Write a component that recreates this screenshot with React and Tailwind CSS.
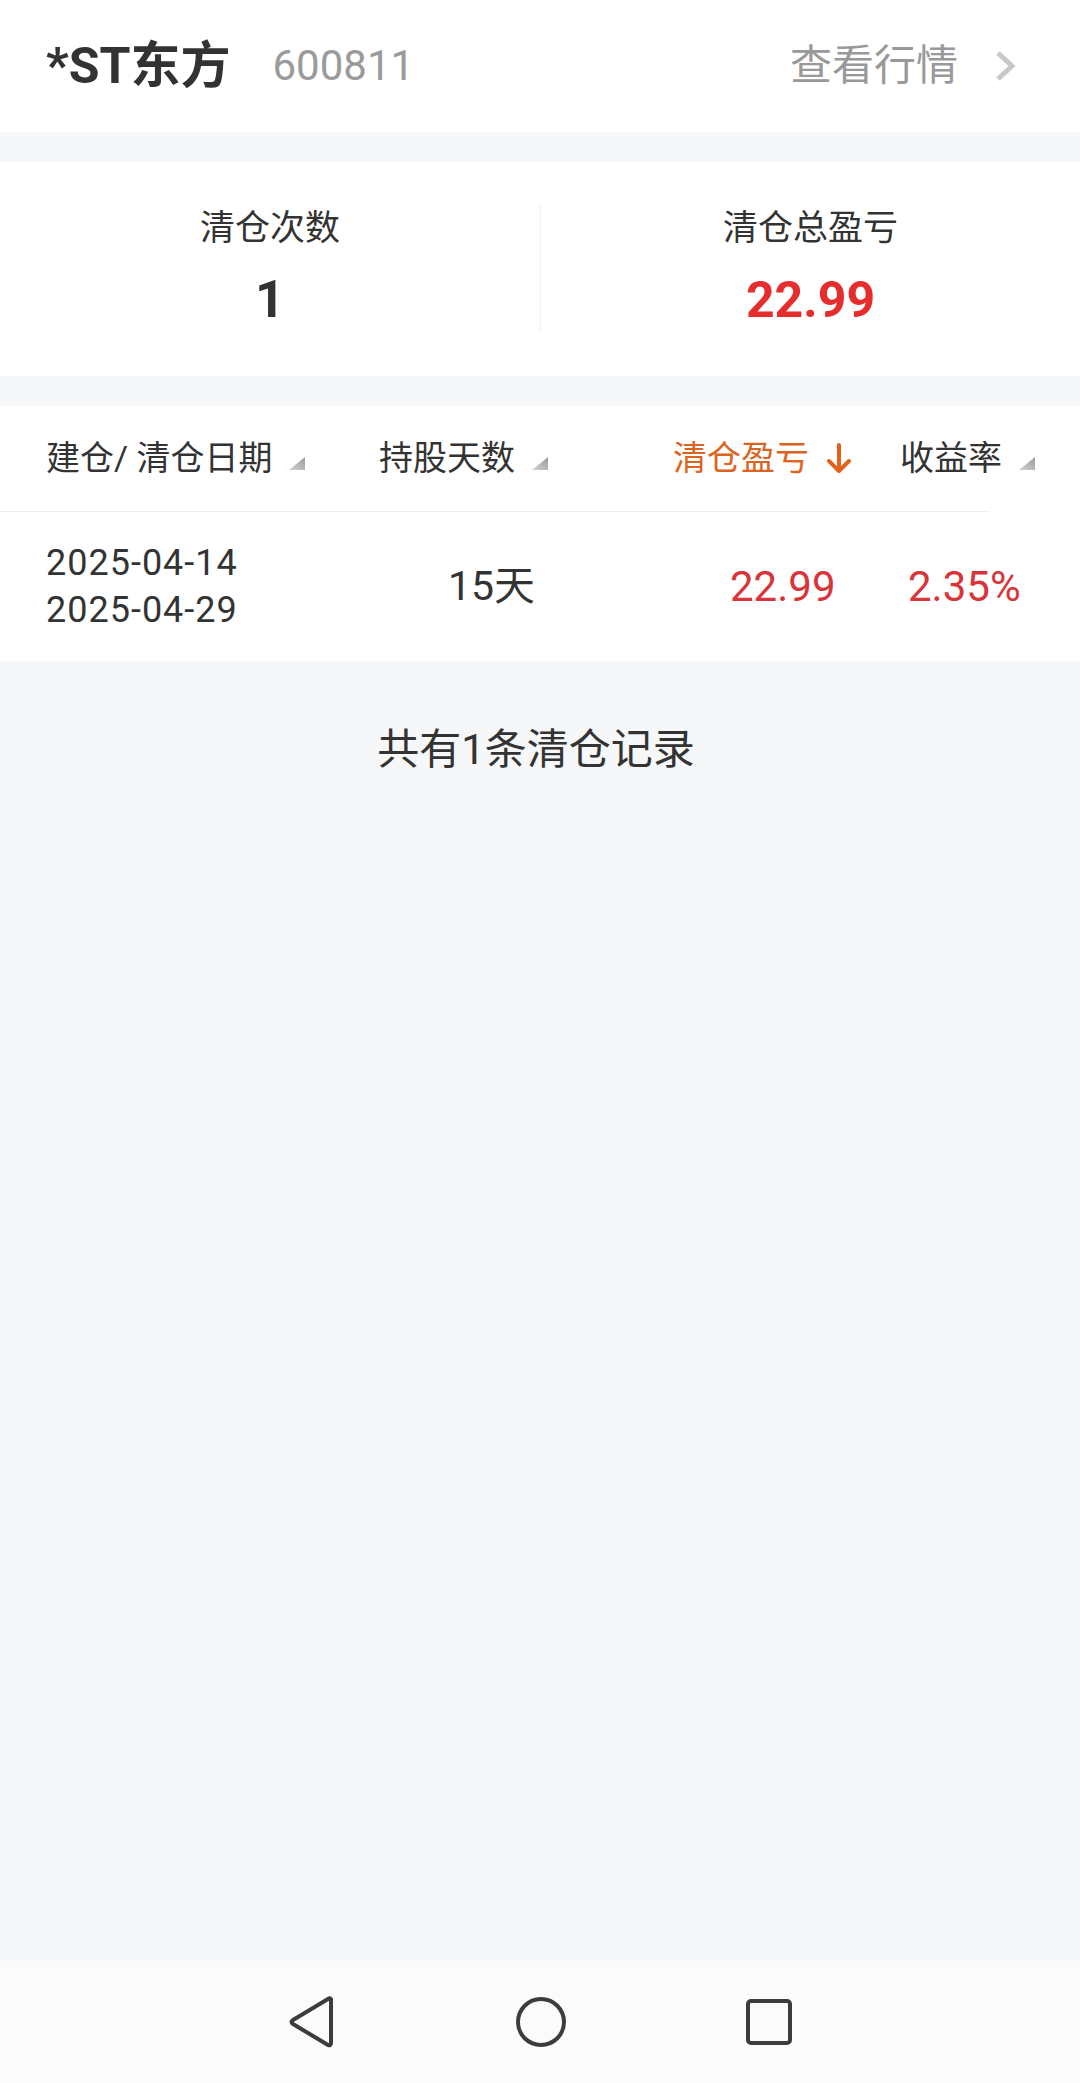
import React from 'react';

const SortTri = () => (
  <svg width="16" height="13" viewBox="0 0 16 13" className="mt-[10px] shrink-0">
    <defs>
      <linearGradient id="tri" x1="0" y1="1" x2="1" y2="0">
        <stop offset="0" stopColor="#d4d4d4" />
        <stop offset="1" stopColor="#9a9a9a" />
      </linearGradient>
    </defs>
    <polygon points="0,13 16,13 16,0" fill="url(#tri)" />
  </svg>
);

const DownArrow = () => (
  <svg width="26" height="32" viewBox="0 0 26 32" className="shrink-0">
    <path d="M13 2 V28 M3 18 L13 28 L23 18" fill="none" stroke="#e2621c" strokeWidth="4" strokeLinecap="round" strokeLinejoin="round" />
  </svg>
);

export default function App() {
  return (
    <div className="min-h-[2083px] flex flex-col bg-[#f6f7f9] font-['Roboto','Noto_Sans_CJK_SC',sans-serif] text-[#333333]">
      {/* title bar */}
      <div className="h-[132px] bg-white flex items-center pl-[46px] pr-[64px]">
        <span className="text-[50px] font-bold leading-none text-[#333333]">*ST东方</span>
        <span className="ml-[42px] text-[42px] leading-none text-[#9a9a9a]">600811</span>
        <div className="ml-auto flex items-center">
          <span className="text-[42px] leading-none text-[#999999]">查看行情</span>
          <svg width="22" height="34" viewBox="0 0 22 34" className="ml-[36px]">
            <polyline points="4,4 18,17 4,30" fill="none" stroke="#c8c8c8" strokeWidth="5" />
          </svg>
        </div>
      </div>

      {/* summary */}
      <div className="mt-[30px] bg-white flex py-[43px]">
        <div className="w-1/2 h-[128px] flex flex-col items-center">
          <span className="text-[35px] leading-[48px]">清仓次数</span>
          <span className="mt-[22px] text-[52px] font-bold leading-[50px]">1</span>
        </div>
        <div className="w-1/2 h-[128px] flex flex-col items-center border-l border-[#f0f0f0]">
          <span className="text-[35px] leading-[48px]">清仓总盈亏</span>
          <span className="mt-[22px] text-[50px] font-bold leading-[50px] text-[#e52d2d]">22.99</span>
        </div>
      </div>

      {/* table */}
      <div className="mt-[30px] bg-white">
        <div className="h-[105px] flex items-center text-[34px]">
          <div className="w-[379px] pl-[46px] flex items-center gap-[17px]">
            <span>建仓/ 清仓日期</span>
            <SortTri />
          </div>
          <div className="w-[294px] flex items-center gap-[17px]">
            <span>持股天数</span>
            <SortTri />
          </div>
          <div className="w-[227px] flex items-center gap-[17px] text-[#dd641e]">
            <span>清仓盈亏</span>
            <DownArrow />
          </div>
          <div className="flex-1 flex items-center gap-[17px]">
            <span>收益率</span>
            <SortTri />
          </div>
        </div>
        <div className="h-px w-[990px] bg-[#eeeeee]" />
        <div className="h-[149px] flex items-center">
          <div className="w-[379px] pl-[46px] flex flex-col text-[36px] leading-[47px] tracking-[1px]">
            <span>2025-04-14</span>
            <span>2025-04-29</span>
          </div>
          <div className="w-[294px] pl-[69px] text-[41px]">15天</div>
          <div className="w-[227px] pl-[57px] text-[42px] text-[#d8343a]">22.99</div>
          <div className="flex-1 pl-[8px] text-[42px] text-[#d8343a]">2.35%</div>
        </div>
      </div>

      <div className="flex-1 flex justify-center pt-[61px] pr-[8px]">
        <span className="text-[42px] leading-[56px]">共有1条清仓记录</span>
      </div>

      {/* system nav bar */}
      <div className="h-[122px] bg-[#fbfbfb] flex items-center justify-center">
        <div className="w-[506px] flex items-center justify-between">
          <svg width="50" height="54" viewBox="0 0 50 54">
            <path d="M44 4 L44 48 Q44 51 41 50 L6 29 Q3 27 6 25 L41 4 Q44 2 44 6 Z" fill="none" stroke="#3c3c3c" strokeWidth="4" strokeLinejoin="round" />
          </svg>
          <svg width="52" height="52" viewBox="0 0 52 52">
            <circle cx="26" cy="26" r="23" fill="none" stroke="#3c3c3c" strokeWidth="4" />
          </svg>
          <svg width="48" height="48" viewBox="0 0 48 48">
            <rect x="3" y="3" width="42" height="42" rx="3" fill="none" stroke="#3c3c3c" strokeWidth="4" />
          </svg>
        </div>
      </div>
    </div>
  );
}
